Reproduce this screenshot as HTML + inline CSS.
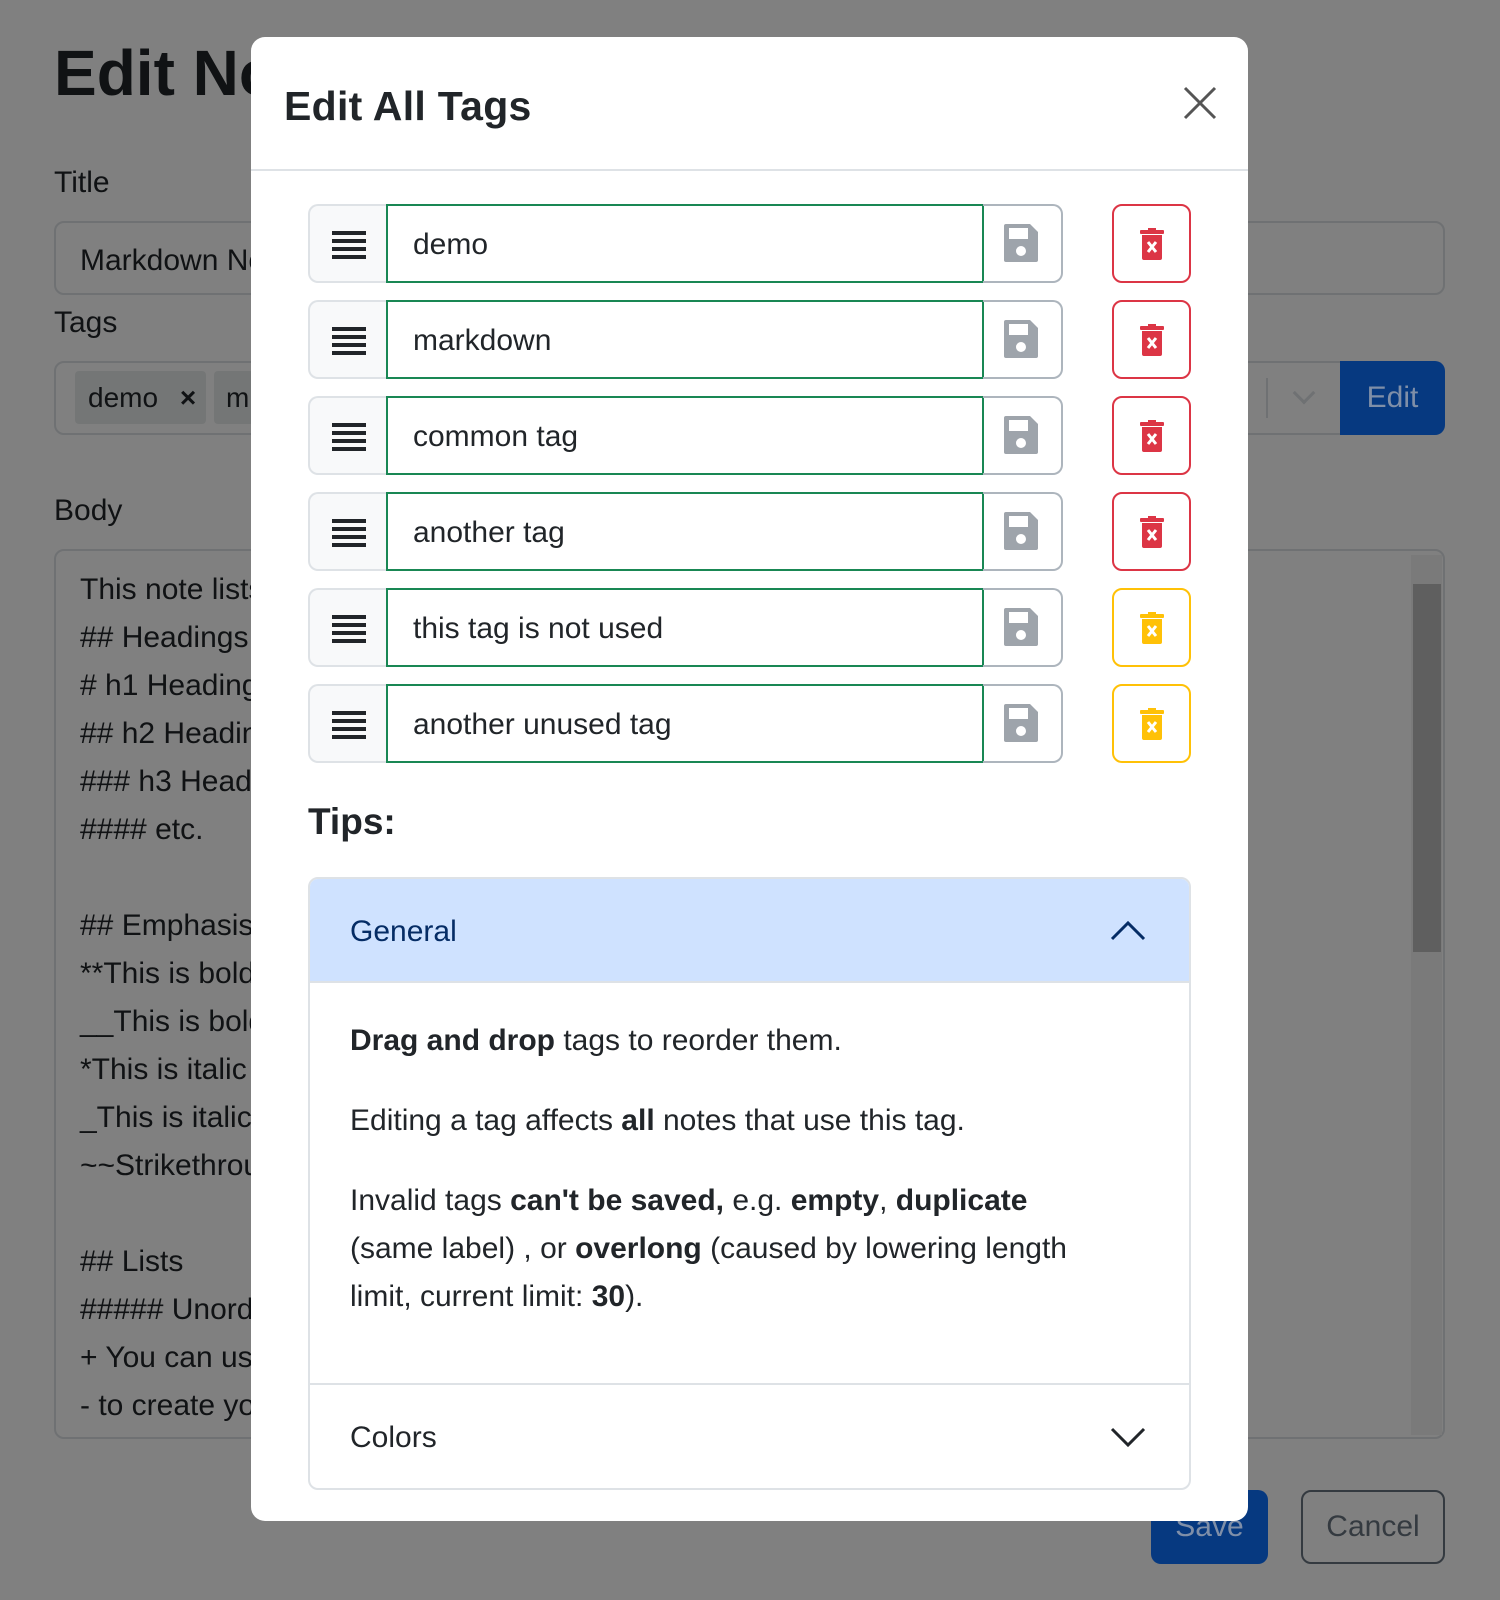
<!DOCTYPE html>
<html><head><meta charset="utf-8"><style>
*{box-sizing:border-box;margin:0;padding:0}
body{width:1500px;height:1600px;overflow:hidden;background:#808080;font-family:"Liberation Sans",sans-serif;color:#101214;position:relative}
.a{position:absolute}
.bgbox{position:absolute;border:2px solid #6f7173;border-radius:10px}
.lbl{position:absolute;font-size:30px;color:#101214}
.modal{position:absolute;left:251px;top:37px;width:997px;height:1484px;background:#fff;border-radius:14px;overflow:hidden}
.row{position:absolute;left:57px;width:760px;height:79px}
.hnd{position:absolute;left:0;top:0;width:80px;height:79px;background:#f8f9fa;border:2px solid #dee2e6;border-right:none;border-radius:10px 0 0 10px}
.inp{position:absolute;left:78px;top:0;width:598px;height:79px;border:2px solid #198754;font-size:30px;line-height:77px;padding-left:25px;color:#212529}
.sv{position:absolute;left:675px;top:0;width:80px;height:79px;border:2px solid #adb5bd;border-left:none;border-radius:0 10px 10px 0}
.del{position:absolute;left:804px;top:0;width:79px;height:79px;border:2px solid #dc3545;border-radius:10px}
.del.w{border-color:#ffc107}
.ham{position:absolute;left:22px;top:25px;width:34px;height:28px;background:repeating-linear-gradient(#212529 0 4px,transparent 4px 8px)}
p{margin:0}
</style></head><body>
<div class="a" style="left:54px;top:36px;font-size:64px;font-weight:bold;color:#101214">Edit Note</div>
<div class="lbl" style="left:54px;top:166px">Title</div>
<div class="bgbox" style="left:54px;top:221px;width:1391px;height:74px"></div>
<div class="lbl" style="left:80px;top:244px">Markdown Note</div>
<div class="lbl" style="left:54px;top:306px">Tags</div>
<div class="bgbox" style="left:54px;top:361px;width:1300px;height:74px"></div>
<div class="a" style="left:75px;top:371px;width:131px;height:53px;background:#747676;border-radius:4px;font-size:28px;line-height:53px;padding-left:13px">demo <b style="margin-left:14px">×</b></div>
<div class="a" style="left:214px;top:371px;width:40px;height:53px;background:#747676;border-radius:4px;font-size:28px;line-height:53px;padding-left:12px">m</div>
<div class="a" style="left:1266px;top:378px;width:2px;height:40px;background:#6f7173"></div>
<div class="a" style="left:1296px;top:385px;width:16px;height:16px;border-right:3px solid #6f7173;border-bottom:3px solid #6f7173;transform:rotate(45deg)"></div>
<div class="a" style="left:1340px;top:361px;width:105px;height:74px;background:#063980;border-radius:0 10px 10px 0;color:#7f8fa8;font-size:30px;line-height:74px;text-align:center">Edit</div>
<div class="lbl" style="left:54px;top:494px">Body</div>
<div class="bgbox" style="left:54px;top:549px;width:1391px;height:890px"></div>
<div class="a" style="left:80px;top:566px;font-size:30px;line-height:48px;white-space:pre">This note lists
## Headings
# h1 Heading
## h2 Heading
### h3 Heading
#### etc.

## Emphasis
**This is bold
__This is bold
*This is italic
_This is italic
~~Strikethrough

## Lists
##### Unordered
+ You can use
- to create your</div>
<div class="a" style="left:1411px;top:555px;width:31px;height:880px;background:#7a7a7a"></div>
<div class="a" style="left:1413px;top:584px;width:28px;height:368px;background:#5f5f5f"></div>
<div class="a" style="left:1151px;top:1490px;width:117px;height:74px;background:#063980;border-radius:10px;color:#7f8fa8;font-size:30px;line-height:74px;text-align:center">Save</div>
<div class="a" style="left:1301px;top:1490px;width:144px;height:74px;border:2px solid #343a40;border-radius:10px;color:#343a40;font-size:30px;line-height:70px;text-align:center">Cancel</div>

<div class="modal">
 <div class="a" style="left:33px;top:46px;font-size:41px;font-weight:bold;color:#212529;letter-spacing:0.3px">Edit All Tags</div>
 <svg class="a" style="left:932px;top:49px" width="34" height="34" viewBox="0 0 34 34"><path d="M2 2L32 32M32 2L2 32" stroke="#555" stroke-width="3"/></svg>
 <div class="a" style="left:0;top:132px;width:997px;height:2px;background:#dee2e6"></div>

 <div class="row" style="top:167px"><div class="hnd"><div class="ham"></div></div><div class="inp">demo</div><div class="sv"></div><div class="del"></div></div>
 <div class="row" style="top:263px"><div class="hnd"><div class="ham"></div></div><div class="inp">markdown</div><div class="sv"></div><div class="del"></div></div>
 <div class="row" style="top:359px"><div class="hnd"><div class="ham"></div></div><div class="inp">common tag</div><div class="sv"></div><div class="del"></div></div>
 <div class="row" style="top:455px"><div class="hnd"><div class="ham"></div></div><div class="inp">another tag</div><div class="sv"></div><div class="del"></div></div>
 <div class="row" style="top:551px"><div class="hnd"><div class="ham"></div></div><div class="inp">this tag is not used</div><div class="sv"></div><div class="del w"></div></div>
 <div class="row" style="top:647px"><div class="hnd"><div class="ham"></div></div><div class="inp">another unused tag</div><div class="sv"></div><div class="del w"></div></div>

 <svg class="a" style="left:0;top:0;pointer-events:none" width="997" height="760">
  <defs>
   <g id="fl"><path d="M0 2Q0 0 2 0H26L34 8V36Q34 38 32 38H2Q0 38 0 36Z" fill="#9ea4ab"/><rect x="5" y="4" width="19" height="11" fill="#fff"/><circle cx="17" cy="27" r="5" fill="#fff"/></g>
   <g id="tr"><rect x="0" y="2" width="24" height="4" rx="1"/><rect x="8" y="0" width="8" height="3"/><path d="M2 7H22V30Q22 32 20 32H4Q2 32 2 30Z"/><path d="M8 14L16 24M16 14L8 24" stroke="#fff" stroke-width="3"/></g>
  </defs>
  <use href="#fl" x="753" y="187"/><use href="#fl" x="753" y="283"/><use href="#fl" x="753" y="379"/><use href="#fl" x="753" y="475"/><use href="#fl" x="753" y="571"/><use href="#fl" x="753" y="667"/>
  <g fill="#dc3545"><use href="#tr" x="889" y="191"/><use href="#tr" x="889" y="287"/><use href="#tr" x="889" y="383"/><use href="#tr" x="889" y="479"/></g>
  <g fill="#ffc107"><use href="#tr" x="889" y="575"/><use href="#tr" x="889" y="671"/></g>
 </svg>

 <div class="a" style="left:57px;top:764px;font-size:37px;font-weight:bold;color:#212529">Tips:</div>
 <div class="a" style="left:57px;top:840px;width:883px;height:613px;border:2px solid #dee2e6;border-radius:10px;overflow:hidden">
  <div class="a" style="left:0;top:0;width:879px;height:104px;background:#cfe2ff;border-bottom:2px solid #dee2e6"></div>
  <div class="a" style="left:40px;top:36px;font-size:30px;color:#052c65">General</div>
  <svg class="a" style="left:800px;top:40px" width="36" height="22"><path d="M2 20L18 4L34 20" fill="none" stroke="#052c65" stroke-width="3"/></svg>
  <div class="a" style="left:40px;top:138px;width:820px;font-size:30px;line-height:48px;color:#212529">
   <p><b>Drag and drop</b> tags to reorder them.</p>
   <p style="margin-top:32px">Editing a tag affects <b>all</b> notes that use this tag.</p>
   <p style="margin-top:32px">Invalid tags <b>can't be saved,</b> e.g. <b>empty</b>, <b>duplicate</b><br>(same label) , or <b>overlong</b> (caused by lowering length<br>limit, current limit: <b>30</b>).</p>
  </div>
  <div class="a" style="left:0;top:504px;width:879px;height:2px;background:#dee2e6"></div>
  <div class="a" style="left:40px;top:542px;font-size:30px;color:#212529">Colors</div>
  <svg class="a" style="left:800px;top:548px" width="36" height="22"><path d="M2 2L18 18L34 2" fill="none" stroke="#212529" stroke-width="3"/></svg>
 </div>
</div>
</body></html>
